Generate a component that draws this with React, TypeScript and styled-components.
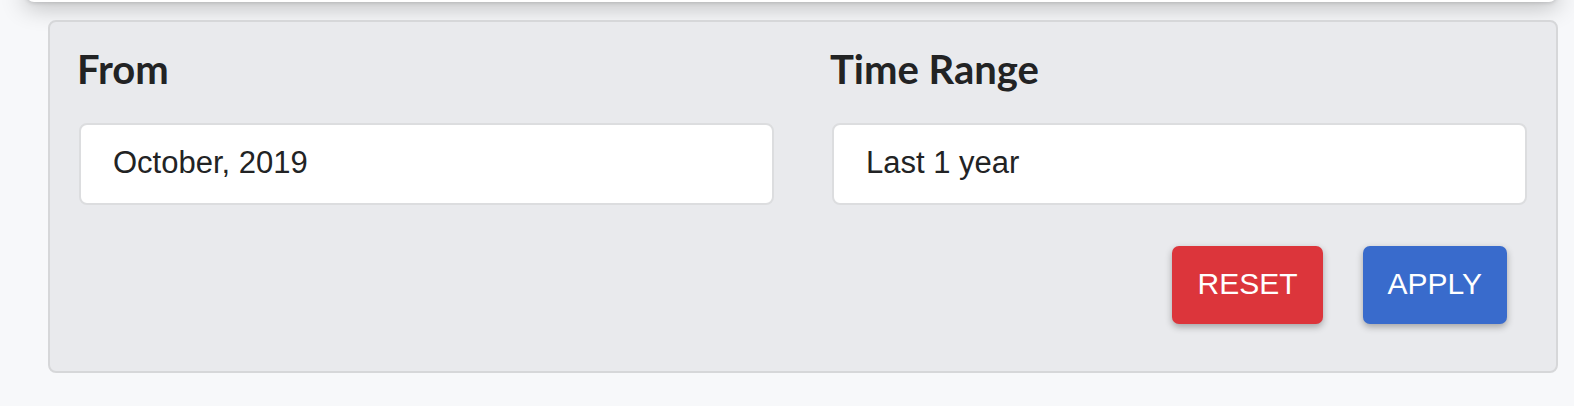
import { FC } from 'react';
import styled, { createGlobalStyle } from 'styled-components';

const GlobalStyle = createGlobalStyle`
  html, body {
    margin: 0;
    padding: 0;
    background: #f7f8fa;
  }
`;

type Filter = { label: string; value: string };

const filters: Filter[] = [
  { label: 'From', value: 'October, 2019' },
  { label: 'Time Range', value: 'Last 1 year' },
];

const App: FC = () => (
  <>
    <GlobalStyle />
    <Page>
      <TopCard />
      <FilterPanel>
        <FieldGrid>
          {filters.map((filter) => (
            <FieldGroup key={filter.label}>
              <FieldLabel>{filter.label}</FieldLabel>
              <FieldBox>{filter.value}</FieldBox>
            </FieldGroup>
          ))}
        </FieldGrid>
        <Actions>
          <ActionButton $variant="danger">RESET</ActionButton>
          <ActionButton $variant="primary">APPLY</ActionButton>
        </Actions>
      </FilterPanel>
    </Page>
  </>
);

export default App;

const Page = styled.div`
  min-height: 406px;
  padding-top: 1px;
  background: #f7f8fa;
  overflow: hidden;
`;

// only the bottom edge of the card above is in view, so its shadow does most of the work
const TopCard = styled.div`
  height: 12px;
  margin: -11px 17px 0 26px;
  background: #ffffff;
  border-radius: 0 0 8px 8px;
  box-shadow: 0 2px 24px 2px rgba(0, 0, 0, 0.3), 0 1px 4px rgba(0, 0, 0, 0.15);
`;

const FilterPanel = styled.section`
  margin: 18px 16px 0 48px;
  padding: 24px 29px 47px;
  background: #e9eaed;
  border: 2px solid #d6d7d9;
  border-radius: 8px;
`;

const FieldGrid = styled.div`
  display: grid;
  grid-template-columns: 1fr 1fr;
  column-gap: 58px;
`;

const FieldGroup = styled.div`
  display: flex;
  flex-direction: column;
  gap: 30px;
`;

const FieldLabel = styled.h2`
  margin: 0 0 0 -2px;
  font-family: Lato, 'Open Sans', sans-serif;
  font-weight: 700;
  font-size: 40px;
  line-height: 47px;
  color: #222324;
`;

const FieldBox = styled.div`
  box-sizing: border-box;
  display: flex;
  align-items: center;
  height: 82px;
  padding: 0 32px 2px;
  background: #ffffff;
  border: 2px solid #dcdddf;
  border-radius: 8px;
  font-family: 'Liberation Sans', Arial, sans-serif;
  font-size: 31px;
  color: #222324;
`;

const Actions = styled.div`
  display: flex;
  justify-content: flex-end;
  margin-top: 41px;
`;

const ActionButton = styled.button<{ $variant: 'danger' | 'primary' }>`
  height: 78px;
  margin: 0 20px;
  padding: 0 25px 2px;
  border: none;
  border-radius: 7px;
  background: ${(props): string => (props.$variant === 'danger' ? '#dc353b' : '#396bcc')};
  color: #ffffff;
  font-family: 'Liberation Sans', Arial, sans-serif;
  font-size: 30px;
  box-shadow: 0 3px 7px rgba(0, 0, 0, 0.3);
  cursor: pointer;
`;
